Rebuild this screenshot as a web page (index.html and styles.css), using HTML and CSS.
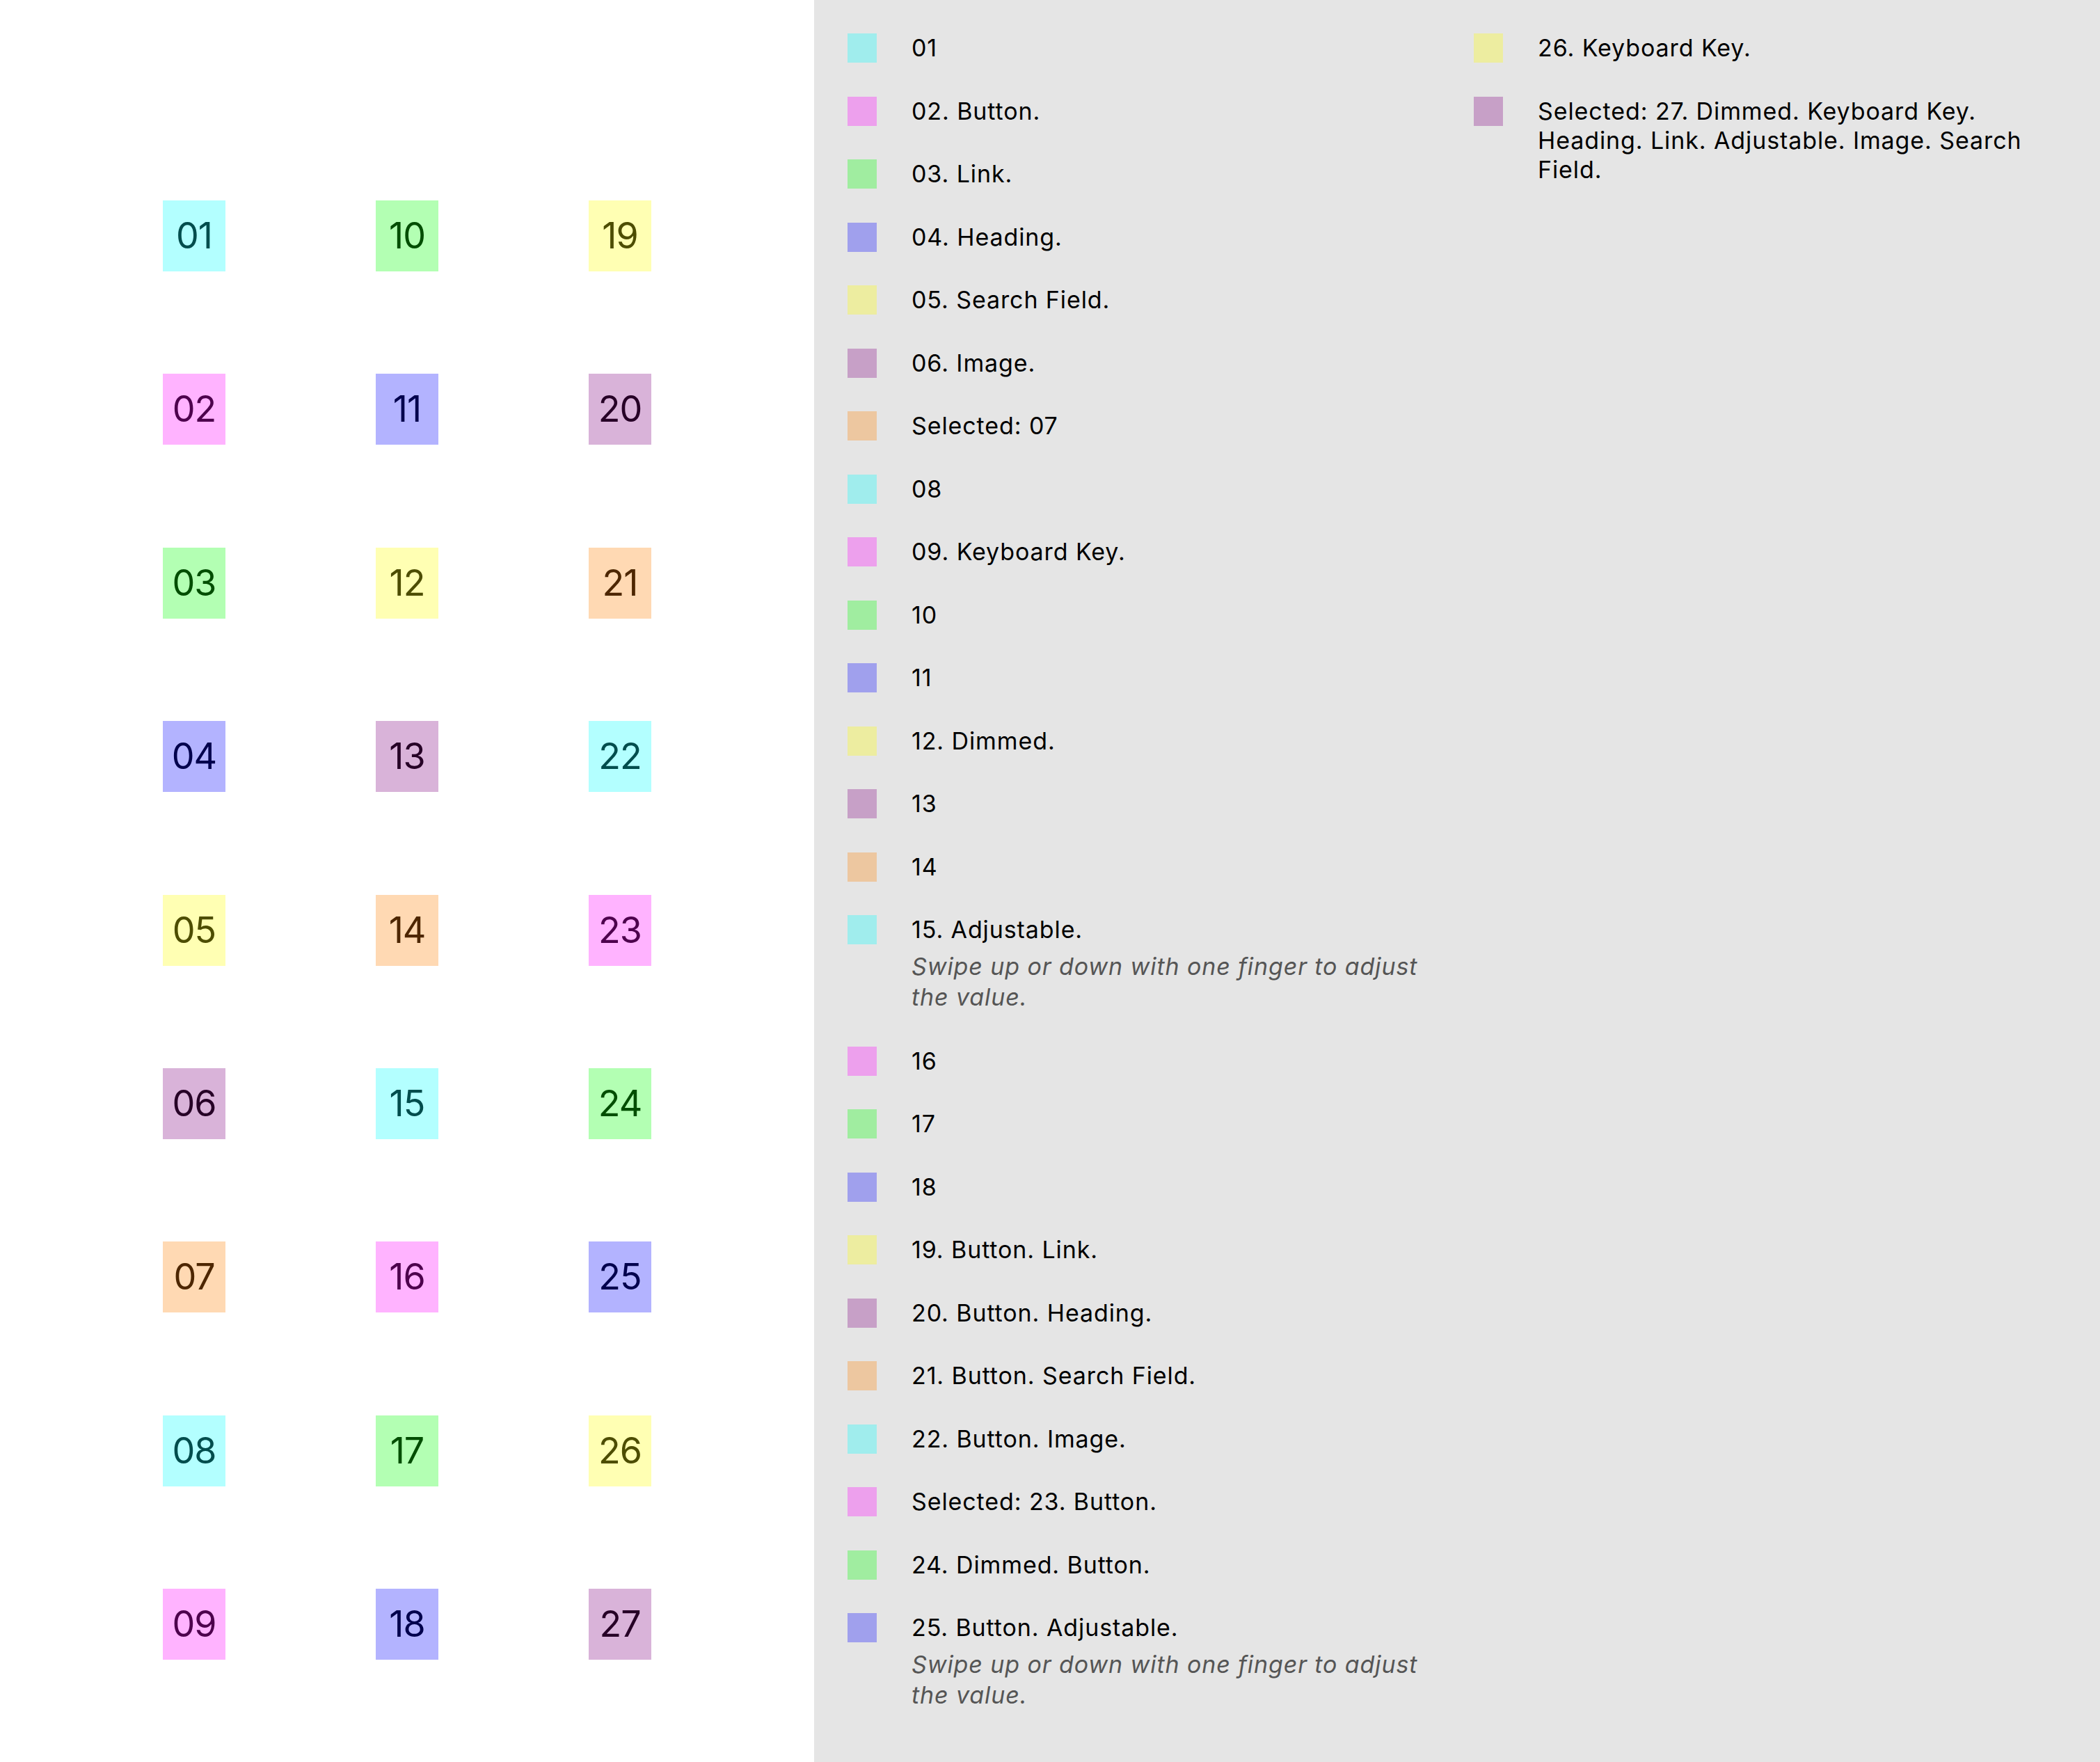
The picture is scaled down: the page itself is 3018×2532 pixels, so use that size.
FILE: index.html
```html
<!DOCTYPE html>
<html lang="en">
<head>
<meta charset="utf-8">
<title>Accessibility elements</title>
<link rel="stylesheet" href="styles.css">
</head>
<body>
<main class="canvas">
  <div class="grid">
    <div class="box c-cyan">01</div>
    <div class="box c-pink">02</div>
    <div class="box c-green">03</div>
    <div class="box c-blue">04</div>
    <div class="box c-yellow">05</div>
    <div class="box c-purple">06</div>
    <div class="box c-orange">07</div>
    <div class="box c-cyan">08</div>
    <div class="box c-pink">09</div>
    <div class="box c-green">10</div>
    <div class="box c-blue">11</div>
    <div class="box c-yellow">12</div>
    <div class="box c-purple">13</div>
    <div class="box c-orange">14</div>
    <div class="box c-cyan">15</div>
    <div class="box c-pink">16</div>
    <div class="box c-green">17</div>
    <div class="box c-blue">18</div>
    <div class="box c-yellow">19</div>
    <div class="box c-purple">20</div>
    <div class="box c-orange">21</div>
    <div class="box c-cyan">22</div>
    <div class="box c-pink">23</div>
    <div class="box c-green">24</div>
    <div class="box c-blue">25</div>
    <div class="box c-yellow">26</div>
    <div class="box c-purple">27</div>
  </div>
</main>
<aside class="legend">
  <ul class="legend-col">
    <li class="item"><span class="swatch s-cyan"></span><div class="label">01</div></li>
    <li class="item"><span class="swatch s-pink"></span><div class="label">02. Button.</div></li>
    <li class="item"><span class="swatch s-green"></span><div class="label">03. Link.</div></li>
    <li class="item"><span class="swatch s-blue"></span><div class="label">04. Heading.</div></li>
    <li class="item"><span class="swatch s-yellow"></span><div class="label">05. Search Field.</div></li>
    <li class="item"><span class="swatch s-purple"></span><div class="label">06. Image.</div></li>
    <li class="item"><span class="swatch s-orange"></span><div class="label">Selected: 07</div></li>
    <li class="item"><span class="swatch s-cyan"></span><div class="label">08</div></li>
    <li class="item"><span class="swatch s-pink"></span><div class="label">09. Keyboard Key.</div></li>
    <li class="item"><span class="swatch s-green"></span><div class="label">10</div></li>
    <li class="item"><span class="swatch s-blue"></span><div class="label">11</div></li>
    <li class="item"><span class="swatch s-yellow"></span><div class="label">12. Dimmed.</div></li>
    <li class="item"><span class="swatch s-purple"></span><div class="label">13</div></li>
    <li class="item"><span class="swatch s-orange"></span><div class="label">14</div></li>
    <li class="item"><span class="swatch s-cyan"></span><div class="label">15. Adjustable.<p class="hint">Swipe up or down with one finger to adjust the value.</p></div></li>
    <li class="item"><span class="swatch s-pink"></span><div class="label">16</div></li>
    <li class="item"><span class="swatch s-green"></span><div class="label">17</div></li>
    <li class="item"><span class="swatch s-blue"></span><div class="label">18</div></li>
    <li class="item"><span class="swatch s-yellow"></span><div class="label">19. Button. Link.</div></li>
    <li class="item"><span class="swatch s-purple"></span><div class="label">20. Button. Heading.</div></li>
    <li class="item"><span class="swatch s-orange"></span><div class="label">21. Button. Search Field.</div></li>
    <li class="item"><span class="swatch s-cyan"></span><div class="label">22. Button. Image.</div></li>
    <li class="item"><span class="swatch s-pink"></span><div class="label">Selected: 23. Button.</div></li>
    <li class="item"><span class="swatch s-green"></span><div class="label">24. Dimmed. Button.</div></li>
    <li class="item"><span class="swatch s-blue"></span><div class="label">25. Button. Adjustable.<p class="hint">Swipe up or down with one finger to adjust the value.</p></div></li>
  </ul>
  <ul class="legend-col">
    <li class="item"><span class="swatch s-yellow"></span><div class="label">26. Keyboard Key.</div></li>
    <li class="item"><span class="swatch s-purple"></span><div class="label">Selected: 27. Dimmed. Keyboard Key. Heading. Link. Adjustable. Image. Search Field.</div></li>
  </ul>
</aside>
</body>
</html>
```

FILE: styles.css
```css
html, body {
  margin: 0;
  padding: 0;
}

body {
  display: flex;
  width: 3018px;
  height: 2532px;
  overflow: hidden;
  font-family: Inter, "Noto Sans", "Liberation Sans", sans-serif;
  background: #ffffff;
}

.canvas {
  width: 1170px;
  flex: none;
  background: #ffffff;
}

.grid {
  display: grid;
  grid-template-columns: repeat(3, 306px);
  grid-template-rows: repeat(9, 102px);
  grid-auto-flow: column;
  row-gap: 147.4px;
  justify-content: center;
  padding-top: 288px;
}

.box {
  justify-self: center;
  box-sizing: border-box;
  width: 90px;
  height: 102px;
  display: flex;
  align-items: center;
  justify-content: center;
  font-size: 52px;
  line-height: 62px;
  letter-spacing: -1px;
}

.c-cyan   { background: #b3ffff; color: #004d4d; }
.c-pink   { background: #ffb3ff; color: #4d004d; }
.c-green  { background: #b3ffb3; color: #004d00; }
.c-blue   { background: #b3b3ff; color: #00004d; }
.c-yellow { background: #ffffb3; color: #4d4d00; }
.c-purple { background: #d9b3d9; color: #260026; }
.c-orange { background: #ffd9b3; color: #4d2600; }

.legend {
  flex: 1;
  background: #e5e5e5;
  box-sizing: border-box;
  padding: 48px;
  display: flex;
  gap: 48px;
}

.legend-col {
  list-style: none;
  margin: 0;
  padding: 0;
  width: 852px;
  flex: none;
}

.item {
  display: flex;
  align-items: flex-start;
  margin-bottom: 48.5px;
}

.swatch {
  flex: none;
  width: 42px;
  height: 42px;
  margin-right: 50px;
}

.s-cyan   { background: #a0eded; }
.s-pink   { background: #eda0ed; }
.s-green  { background: #a0eda0; }
.s-blue   { background: #a0a0ed; }
.s-yellow { background: #ededa0; }
.s-purple { background: #c7a0c7; }
.s-orange { background: #edc7a0; }

.label {
  flex: 1;
  font-size: 34px;
  line-height: 42px;
  color: #000000;
  letter-spacing: 0.9px;
}

.hint {
  margin: 10px 0 0;
  font-style: italic;
  font-size: 34px;
  line-height: 44px;
  color: #555555;
  letter-spacing: 0.9px;
}
```
